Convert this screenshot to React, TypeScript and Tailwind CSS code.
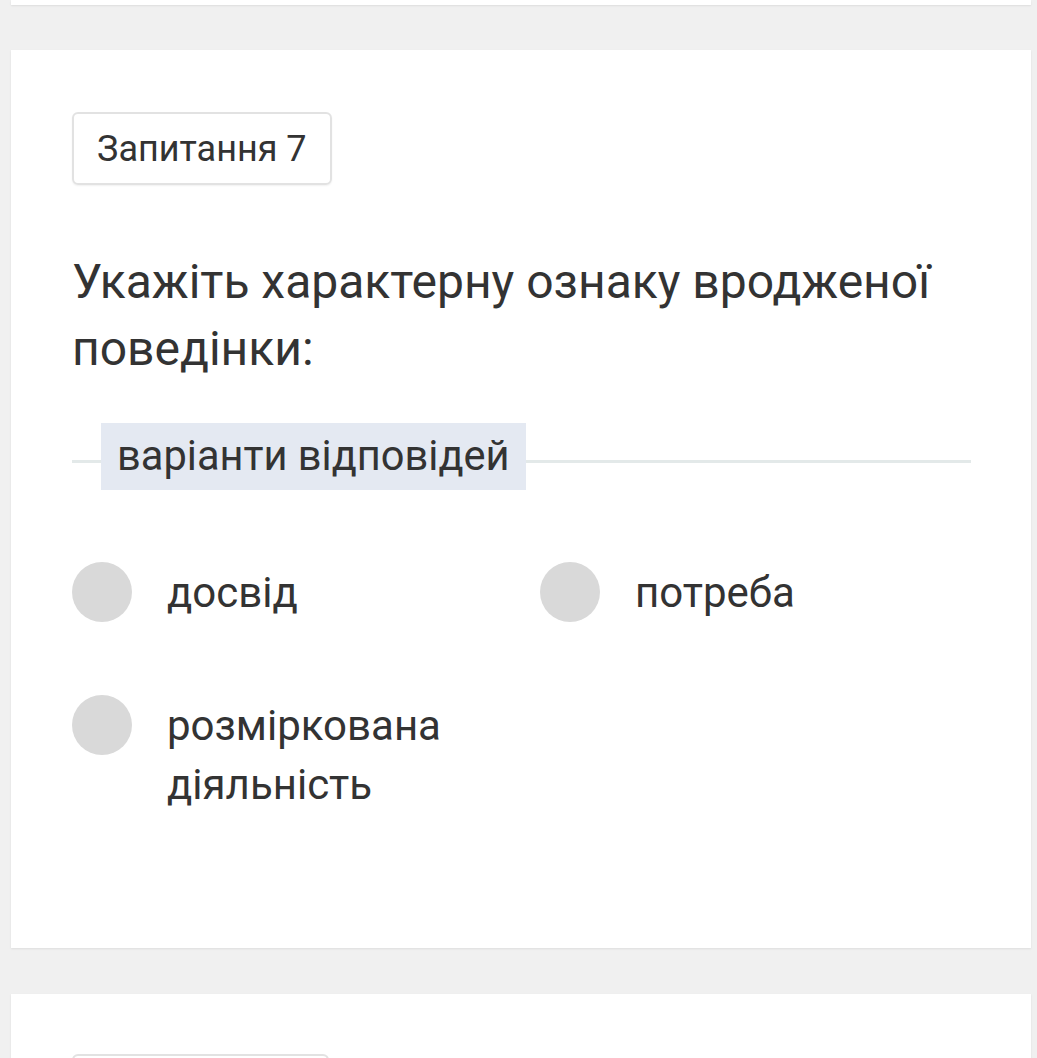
import React from "react";

const font = { fontFamily: "Roboto, 'Noto Sans', sans-serif" };

function Option({ label }: { label: React.ReactNode }) {
  return (
    <div className="flex items-start">
      <div className="w-[60px] h-[60px] rounded-full bg-[#d9d9d9] shrink-0" />
      <div className="ml-[35px] text-[42px] leading-[59px] text-[#333] pt-[1px]">{label}</div>
    </div>
  );
}

export default function App() {
  return (
    <div className="min-h-[1058px] h-[1058px] overflow-hidden bg-[#f0f0f0]" style={font}>
      <div className="ml-[11px] mr-[6px] h-[5px] bg-white shadow-[0_1px_2px_rgba(0,0,0,0.08)]" />
      <div className="ml-[11px] mr-[6px] mt-[45px] bg-white shadow-[0_1px_2px_rgba(0,0,0,0.08)] pt-[62px] pl-[61px] pr-[60px] pb-[134px]">
        <div className="inline-flex items-center h-[73px] px-[23px] border-2 border-[#e2e2e2] rounded-[6px] shadow-[0_1px_2px_rgba(0,0,0,0.06)] text-[36px] text-[#333]">
          Запитання 7
        </div>
        <div className="mt-[63px] text-[48px] leading-[67px] text-[#333] pr-[20px]">
          Укажіть характерну ознаку вродженої поведінки:
        </div>
        <div className="relative mt-[41px] h-[67px] flex items-center">
          <div className="absolute left-0 right-0 top-[37px] h-[3px] bg-[#e3e9e9]" />
          <div className="relative ml-[29px] h-[67px] flex items-center px-[16px] bg-[#e4e9f2] text-[41.6px] text-[#333]">
            варіанти відповідей
          </div>
        </div>
        <div className="mt-[72px] grid grid-cols-2 gap-x-[37px] gap-y-[73px]">
          <Option label="досвід" />
          <Option label="потреба" />
          <Option label={<>розміркована<br />діяльність</>} />
        </div>
      </div>
      <div className="ml-[11px] mr-[6px] mt-[46px] h-[200px] bg-white shadow-[0_1px_2px_rgba(0,0,0,0.08)] pt-[60px] pl-[61px]">
        <div className="w-[257px] h-[73px] border-2 border-[#e2e2e2] rounded-[6px]" />
      </div>
    </div>
  );
}
